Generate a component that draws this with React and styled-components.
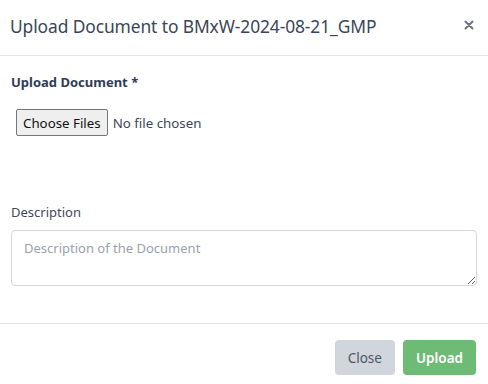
import React from 'react';
import styled, { createGlobalStyle } from 'styled-components';

const GlobalStyle = createGlobalStyle`
    html, body {
        margin: 0;
        padding: 0;
        background: #ffffff;
    }
    body {
        font-family: "Noto Sans", "Open Sans", sans-serif;
    }
    *, *::before, *::after {
        box-sizing: border-box;
    }
`;

function App() {
    return (
        <ModalStyled>
            <GlobalStyle />
            <Header>
                <Title>Upload Document to BMxW-2024-08-21_GMP</Title>
                <CloseIcon aria-label="close">
                    <svg width="10" height="10" viewBox="0 0 10 10">
                        <path d="M1.5 1.5 L8.5 8.5 M8.5 1.5 L1.5 8.5" stroke="#6b7280" strokeWidth="2" strokeLinecap="round" />
                    </svg>
                </CloseIcon>
            </Header>
            <Body>
                <Label bold>
                    Upload Document <Star>*</Star>
                </Label>
                <FileRow>
                    <FileInput type="file" multiple />
                </FileRow>
                <Label className="description">Description</Label>
                <TextArea placeholder="Description of the Document" />
            </Body>
            <Footer>
                <Button variant="close">Close</Button>
                <Button variant="upload">Upload</Button>
            </Footer>
        </ModalStyled>
    );
}

const ModalStyled = styled.div`
    width: 488px;
    height: 384px;
    background: #fff;
    display: flex;
    flex-direction: column;
    overflow: hidden;
`;

const Header = styled.div`
    height: 56px;
    flex-shrink: 0;
    display: flex;
    align-items: center;
    justify-content: space-between;
    padding: 0 14px 0 10px;
    border-bottom: 1px solid #e2e4e8;
`;

const Title = styled.h2`
    margin: 0;
    margin-top: -3px;
    font-size: 17.4px;
    font-weight: 400;
    color: #3a4558;
    letter-spacing: -0.1px;
`;

const CloseIcon = styled.span`
    display: flex;
    margin-top: -5px;
`;

const Body = styled.div`
    flex: 1;
    padding: 17px 11px 0 11px;
    display: flex;
    flex-direction: column;

    .description {
        margin-top: 67px;
    }
`;

const Label = styled.label`
    font-size: 13px;
    font-weight: ${p => (p.bold ? 700 : 400)};
    color: ${p => (p.bold ? '#2f3d56' : '#3f4a5c')};
    line-height: 18px;
`;

const Star = styled.span`
    color: #2f3d56;
`;

const FileRow = styled.div`
    margin-top: 18px;
    padding-left: 5px;
    height: 27px;
`;

const FileInput = styled.input`
    font-family: "Noto Sans", "Open Sans", sans-serif;
    font-size: 13.3px;
    color: #3a4558;

    &::file-selector-button {
        font-family: "Noto Sans", "Open Sans", sans-serif;
        font-size: 13.3px;
        color: #111;
        height: 27px;
        padding: 0 6px;
        margin-right: 5px;
        background: #efefef;
        border: 1px solid #767676;
        border-radius: 2px;
    }
`;

const TextArea = styled.textarea`
    margin-top: 9px;
    height: 56px;
    width: 100%;
    padding: 8px 12px;
    font-family: "Noto Sans", "Open Sans", sans-serif;
    font-size: 13px;
    color: #3a4558;
    border: 1px solid #d5d8de;
    border-radius: 4px;
    resize: vertical;
    outline: none;

    &::placeholder {
        color: #9aa1ad;
    }
`;

const Footer = styled.div`
    height: 61px;
    flex-shrink: 0;
    border-top: 1px solid #e2e4e8;
    display: flex;
    justify-content: flex-end;
    align-items: flex-start;
    gap: 8px;
    padding: 16px 12px 0 0;
`;

const Button = styled.button`
    height: 35px;
    padding: 0 13px;
    border: none;
    border-radius: 4px;
    font-family: "Noto Sans", "Open Sans", sans-serif;
    font-size: 13.5px;
    font-weight: ${p => (p.variant === 'upload' ? 600 : 400)};
    background: ${p => (p.variant === 'upload' ? '#6dbb74' : '#d1d5dc')};
    color: ${p => (p.variant === 'upload' ? '#ffffff' : '#4b5565')};
`;

export default App;
